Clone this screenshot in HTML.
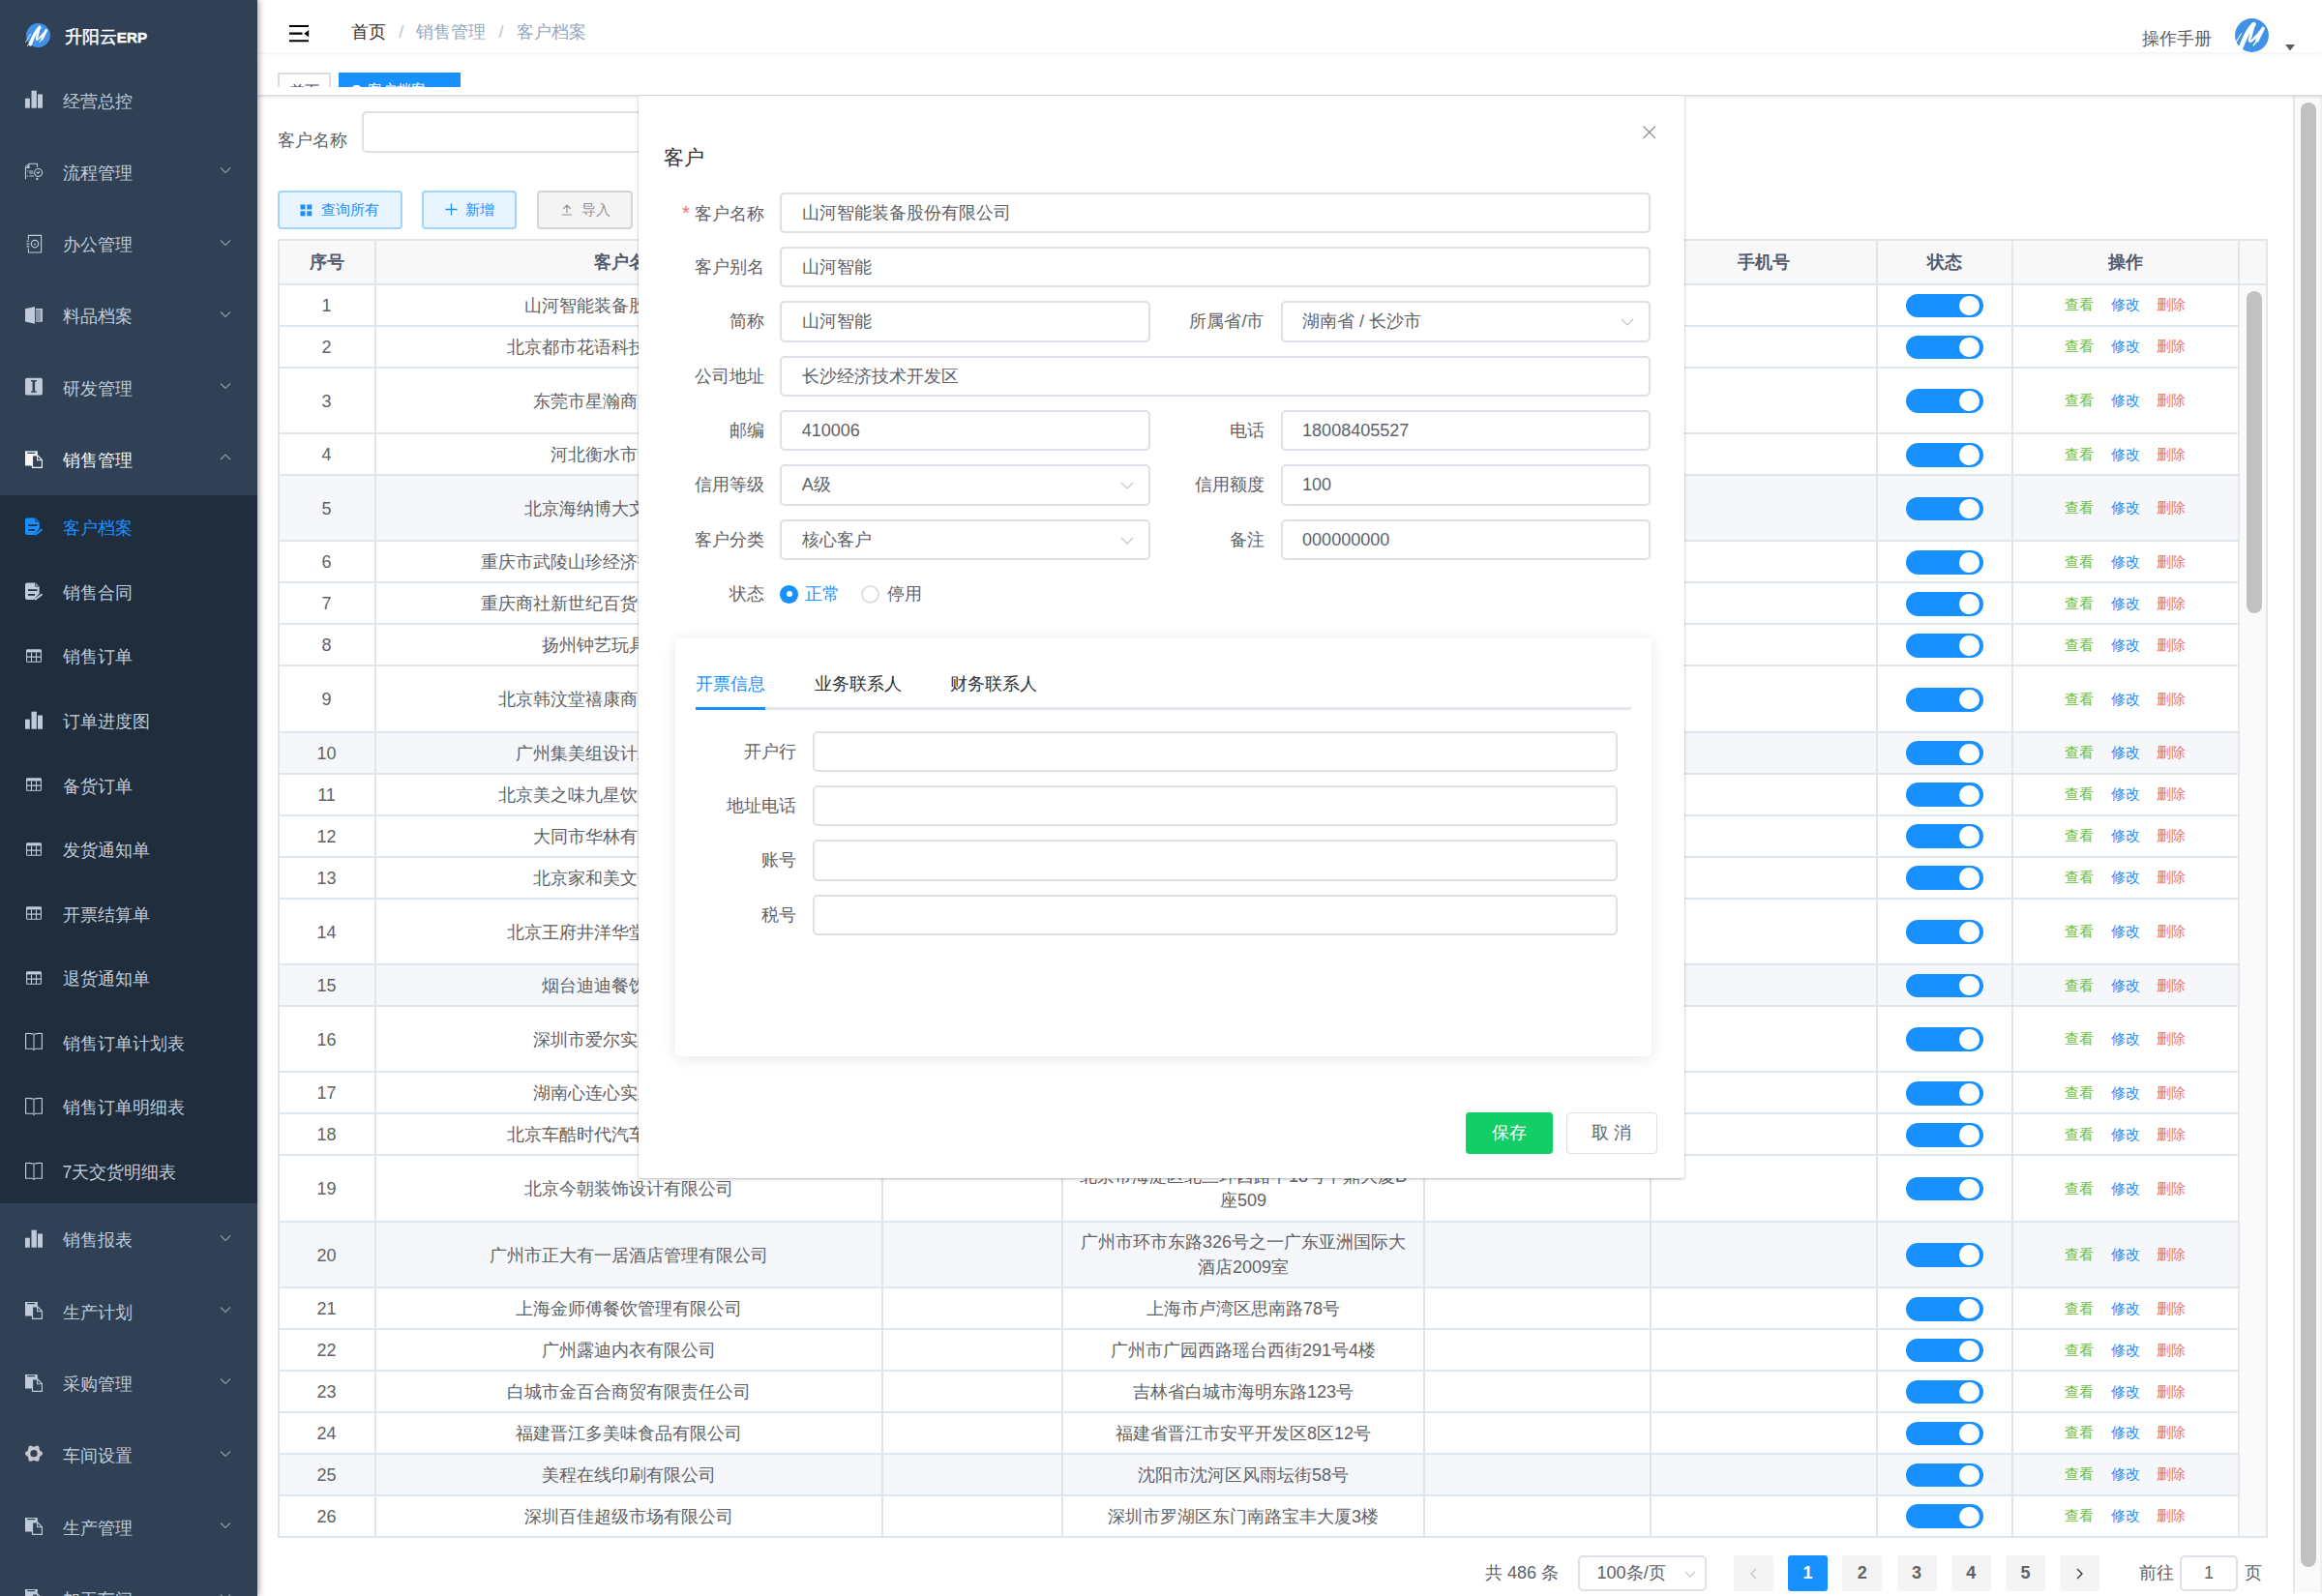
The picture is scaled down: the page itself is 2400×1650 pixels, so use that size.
<!DOCTYPE html><html><head><meta charset="utf-8"><title>客户档案</title><style>
*{box-sizing:border-box}
html,body{margin:0;padding:0}
body{width:2400px;height:1650px;overflow:hidden;position:relative;background:#fff;font-family:"Liberation Sans", sans-serif;color:#606266}
.a{position:absolute}
.t{white-space:nowrap}
#sb{left:0;top:0;width:266px;height:1650px;background:#304156;z-index:5;overflow:hidden;box-shadow:2px 0 6px rgba(0,21,41,.35)}
.mi{position:absolute;left:0;width:266px;font-size:17.7px;color:#bfcbd9}
.mi .ic{position:absolute;left:25px;width:20px;height:20px}
.mi .tx{position:absolute;left:64.5px;top:1.5px;white-space:nowrap}
.mi .ar{position:absolute;left:227px;width:12px;height:8px}
#nav{left:266px;top:0;width:2134px;height:54px;background:#fff;box-shadow:0 1px 4px rgba(0,21,41,.08);z-index:3}
#tags{left:266px;top:54px;width:2134px;height:45px;background:#fff;border-bottom:1.5px solid #d8dce5;box-shadow:0 1px 3px 0 rgba(0,0,0,.12),0 0 3px 0 rgba(0,0,0,.04);z-index:2;overflow:hidden}
.inp{position:absolute;border:2px solid #dde0e7;border-radius:5px;background:#fff;font-size:18px;color:#606266;white-space:nowrap}
.lbl{position:absolute;font-size:18px;color:#606266;white-space:nowrap;text-align:right}
.btn{position:absolute;border-radius:4px;font-size:15.4px;white-space:nowrap}
.cell{position:absolute;font-size:18px;color:#606266;text-align:center;white-space:nowrap}
.hl{position:absolute;background:#dfe6ec}
</style></head><body>
<div id="sb" class="a">
<svg class="a" style="left:26.5px;top:24px;overflow:visible" width="25" height="25" viewBox="0 0 25 25"><circle cx="12.5" cy="12.5" r="12.45" fill="#3f92e8"/><g fill="none" stroke="#fff" stroke-linecap="round" stroke-linejoin="round"><path d="M4.3 21.8C6.8 15 9.8 8.5 13.9 4.4" stroke-width="3.4"/><path d="M13.9 4.4C13.4 7.2 12.2 10.2 11.6 13.2" stroke-width="2.2"/><path d="M11.6 13.2Q10 16.6 11.2 17Q12.6 17.3 20.8 7.4" stroke-width="1.9"/><path d="M20.8 7.4L16.4 16.4" stroke-width="2.5"/><path d="M16.4 16.4L13.7 19.8" stroke-width="1"/><path d="M-0.5 19.6L4.6 11.4M1.4 23.6L4 19.4" stroke-width="0.8"/></g></svg>
<div class="a t" style="left:66.8px;top:24px;height:28px;line-height:28px;font-size:17.6px;font-weight:normal;-webkit-text-stroke:0.45px #fff;color:#fff">升阳云<span style="font-size:15.2px;font-weight:bold">ERP</span></div>
<div class="mi" style="top:66.00px;height:74.3px;line-height:74.3px;color:#bfcbd9">
<svg class="ic" style="top:27.15px" viewBox="0 0 20 20"><rect x="1" y="8.7" width="4.8" height="10" fill="#bfcbd9"/><rect x="7.5" y="0.7" width="5.4" height="18" fill="#bfcbd9"/><rect x="14" y="4.5" width="5" height="14.2" fill="#bfcbd9"/></svg>
<span class="tx">经营总控</span>
</div>
<div class="mi" style="top:140.30px;height:74.3px;line-height:74.3px;color:#bfcbd9">
<svg class="ic" style="top:27.15px" viewBox="0 0 20 20" fill="none" stroke="#bfcbd9" stroke-width="1.1"><path d="M1.5 18.3V5.4L5.2 2.2H13.4V5.8"/><path d="M5.5 2.6V6.9H2Z" fill="#bfcbd9" stroke="none"/><path d="M3 10h1.2M5 10h4M5 12h4.5M3 15h1.2M5.5 15h4.5"/><circle cx="14.6" cy="11.5" r="4"/><path d="M12.8 10.6l1.5 1.8 1.6-2.3"/><circle cx="13.4" cy="18" r="0.6" fill="#bfcbd9"/></svg>
<span class="tx">流程管理</span>
<svg class="ar" style="top:31.95px" viewBox="0 0 12 8"><path d="M1 1.5 L6 6.5 L11 1.5" fill="none" stroke="#909aa8" stroke-width="1.1"/></svg>
</div>
<div class="mi" style="top:214.60px;height:74.3px;line-height:74.3px;color:#bfcbd9">
<svg class="ic" style="top:27.15px" viewBox="0 0 20 20" fill="none" stroke="#bfcbd9" stroke-width="1.15"><path d="M4.4 5.8V1.4H17.6V19H4.4V14.8"/><path d="M2.5 7.2h2.8M2.5 10.1h2.8M2.5 12.8h2.8"/><circle cx="11" cy="10.1" r="3.7"/><path d="M10 11.2L11 9l1.3 2.2z" fill="#bfcbd9" stroke="none"/></svg>
<span class="tx">办公管理</span>
<svg class="ar" style="top:31.95px" viewBox="0 0 12 8"><path d="M1 1.5 L6 6.5 L11 1.5" fill="none" stroke="#909aa8" stroke-width="1.1"/></svg>
</div>
<div class="mi" style="top:288.90px;height:74.3px;line-height:74.3px;color:#bfcbd9">
<svg class="ic" style="top:27.15px" viewBox="0 0 20 20"><path d="M1 3.3 L11 1 V18.8 L1 16.6 Z" fill="#bfcbd9"/><rect x="11.9" y="3" width="7" height="13.7" fill="#bfcbd9"/><path d="M12 5h5.2M12 7h5.2M12 9h5.2M12 11h5.2M12 13h5.2M12 15h5.2" stroke="#304156" stroke-width="0.75"/></svg>
<span class="tx">料品档案</span>
<svg class="ar" style="top:31.95px" viewBox="0 0 12 8"><path d="M1 1.5 L6 6.5 L11 1.5" fill="none" stroke="#909aa8" stroke-width="1.1"/></svg>
</div>
<div class="mi" style="top:363.20px;height:74.3px;line-height:74.3px;color:#bfcbd9">
<svg class="ic" style="top:27.15px" viewBox="0 0 20 20"><rect x="1" y="0.7" width="17.9" height="17.9" rx="1.8" fill="#bfcbd9"/><path d="M7 3.7h5.9M7 15.1h5.9" stroke="#304156" stroke-width="1.4"/><path d="M9.85 3.7v11.4" stroke="#304156" stroke-width="2.6"/></svg>
<span class="tx">研发管理</span>
<svg class="ar" style="top:31.95px" viewBox="0 0 12 8"><path d="M1 1.5 L6 6.5 L11 1.5" fill="none" stroke="#909aa8" stroke-width="1.1"/></svg>
</div>
<div class="mi" style="top:437.50px;height:74.3px;line-height:74.3px;color:#f4f4f5">
<svg class="ic" style="top:27.15px" viewBox="0 0 20 20"><path d="M1 1.3H13.8V16.5H1Z" fill="#f4f4f5"/><path d="M3.3 3.3h7.9" stroke="#304156" stroke-width="1.3"/><path d="M8.5 18.3V5.9H13.8L18.4 10.5V18.3Z" fill="#304156" stroke="#f4f4f5" stroke-width="1.15"/><path d="M13.6 6.2V10.7H18" fill="none" stroke="#f4f4f5" stroke-width="1.1"/></svg>
<span class="tx">销售管理</span>
<svg class="ar" style="top:30.15px" viewBox="0 0 12 8"><path d="M1 7 L6 2 L11 7" fill="none" stroke="#909aa8" stroke-width="1.1"/></svg>
</div>
<div class="a" style="left:0;top:511.80px;width:266px;height:732.05px;background:#1f2d3d"></div>
<div class="mi" style="top:511.80px;height:66.55px;line-height:66.55px;color:#1890ff">
<svg class="ic" style="top:23.27px" viewBox="0 0 20 20"><path d="M1 2.2Q1 0.4 2.8 0.4H11.6L15.6 4.4V11.5L10 17.9H2.8Q1 17.9 1 16.1Z" fill="#1890ff"/><path d="M11.8 0.6V4.2H15.4" fill="none" stroke="#1f2d3d" stroke-width="0.9"/><path d="M4 8.1h9.5M4 12.9h7" stroke="#1f2d3d" stroke-width="1.7"/><path d="M11 18 L18.6 12.3" stroke="#1890ff" stroke-width="2"/></svg>
<span class="tx">客户档案</span></div>
<div class="mi" style="top:578.35px;height:66.55px;line-height:66.55px;color:#bfcbd9">
<svg class="ic" style="top:23.27px" viewBox="0 0 20 20"><path d="M1 2.2Q1 0.4 2.8 0.4H11.6L15.6 4.4V11.5L10 17.9H2.8Q1 17.9 1 16.1Z" fill="#bfcbd9"/><path d="M11.8 0.6V4.2H15.4" fill="none" stroke="#1f2d3d" stroke-width="0.9"/><path d="M4 8.1h9.5M4 12.9h7" stroke="#1f2d3d" stroke-width="1.7"/><path d="M11 18 L18.6 12.3" stroke="#bfcbd9" stroke-width="2"/></svg>
<span class="tx">销售合同</span></div>
<div class="mi" style="top:644.90px;height:66.55px;line-height:66.55px;color:#bfcbd9">
<svg class="ic" style="top:23.27px" viewBox="0 0 20 20" fill="none" stroke="#bfcbd9" stroke-width="1.1"><rect x="2.6" y="3.8" width="14.8" height="12.4" rx="0.8"/><path d="M2.6 5.2h14.8" stroke-width="2.4"/><path d="M2.6 11.1h14.8M7.5 6.5v9.7M12.5 6.5v9.7"/></svg>
<span class="tx">销售订单</span></div>
<div class="mi" style="top:711.45px;height:66.55px;line-height:66.55px;color:#bfcbd9">
<svg class="ic" style="top:23.27px" viewBox="0 0 20 20"><rect x="1" y="8.7" width="4.8" height="10" fill="#bfcbd9"/><rect x="7.5" y="0.7" width="5.4" height="18" fill="#bfcbd9"/><rect x="14" y="4.5" width="5" height="14.2" fill="#bfcbd9"/></svg>
<span class="tx">订单进度图</span></div>
<div class="mi" style="top:778.00px;height:66.55px;line-height:66.55px;color:#bfcbd9">
<svg class="ic" style="top:23.27px" viewBox="0 0 20 20" fill="none" stroke="#bfcbd9" stroke-width="1.1"><rect x="2.6" y="3.8" width="14.8" height="12.4" rx="0.8"/><path d="M2.6 5.2h14.8" stroke-width="2.4"/><path d="M2.6 11.1h14.8M7.5 6.5v9.7M12.5 6.5v9.7"/></svg>
<span class="tx">备货订单</span></div>
<div class="mi" style="top:844.55px;height:66.55px;line-height:66.55px;color:#bfcbd9">
<svg class="ic" style="top:23.27px" viewBox="0 0 20 20" fill="none" stroke="#bfcbd9" stroke-width="1.1"><rect x="2.6" y="3.8" width="14.8" height="12.4" rx="0.8"/><path d="M2.6 5.2h14.8" stroke-width="2.4"/><path d="M2.6 11.1h14.8M7.5 6.5v9.7M12.5 6.5v9.7"/></svg>
<span class="tx">发货通知单</span></div>
<div class="mi" style="top:911.10px;height:66.55px;line-height:66.55px;color:#bfcbd9">
<svg class="ic" style="top:23.27px" viewBox="0 0 20 20" fill="none" stroke="#bfcbd9" stroke-width="1.1"><rect x="2.6" y="3.8" width="14.8" height="12.4" rx="0.8"/><path d="M2.6 5.2h14.8" stroke-width="2.4"/><path d="M2.6 11.1h14.8M7.5 6.5v9.7M12.5 6.5v9.7"/></svg>
<span class="tx">开票结算单</span></div>
<div class="mi" style="top:977.65px;height:66.55px;line-height:66.55px;color:#bfcbd9">
<svg class="ic" style="top:23.27px" viewBox="0 0 20 20" fill="none" stroke="#bfcbd9" stroke-width="1.1"><rect x="2.6" y="3.8" width="14.8" height="12.4" rx="0.8"/><path d="M2.6 5.2h14.8" stroke-width="2.4"/><path d="M2.6 11.1h14.8M7.5 6.5v9.7M12.5 6.5v9.7"/></svg>
<span class="tx">退货通知单</span></div>
<div class="mi" style="top:1044.20px;height:66.55px;line-height:66.55px;color:#bfcbd9">
<svg class="ic" style="top:23.27px" viewBox="0 0 20 20" fill="none" stroke="#bfcbd9" stroke-width="1.15"><path d="M10 2.3Q6 0.9 1.6 1.5V17.2H8Q9.2 17.2 10 18.4Q10.8 17.2 12 17.2H18.4V1.5Q14 0.9 10 2.3Z"/><path d="M10 2.3V18.2" stroke-width="1.5" stroke="#8d9aab"/></svg>
<span class="tx">销售订单计划表</span></div>
<div class="mi" style="top:1110.75px;height:66.55px;line-height:66.55px;color:#bfcbd9">
<svg class="ic" style="top:23.27px" viewBox="0 0 20 20" fill="none" stroke="#bfcbd9" stroke-width="1.15"><path d="M10 2.3Q6 0.9 1.6 1.5V17.2H8Q9.2 17.2 10 18.4Q10.8 17.2 12 17.2H18.4V1.5Q14 0.9 10 2.3Z"/><path d="M10 2.3V18.2" stroke-width="1.5" stroke="#8d9aab"/></svg>
<span class="tx">销售订单明细表</span></div>
<div class="mi" style="top:1177.30px;height:66.55px;line-height:66.55px;color:#bfcbd9">
<svg class="ic" style="top:23.27px" viewBox="0 0 20 20" fill="none" stroke="#bfcbd9" stroke-width="1.15"><path d="M10 2.3Q6 0.9 1.6 1.5V17.2H8Q9.2 17.2 10 18.4Q10.8 17.2 12 17.2H18.4V1.5Q14 0.9 10 2.3Z"/><path d="M10 2.3V18.2" stroke-width="1.5" stroke="#8d9aab"/></svg>
<span class="tx">7天交货明细表</span></div>
<div class="mi" style="top:1243.85px;height:74.3px;line-height:74.3px">
<svg class="ic" style="top:27.15px" viewBox="0 0 20 20"><rect x="1" y="8.7" width="4.8" height="10" fill="#bfcbd9"/><rect x="7.5" y="0.7" width="5.4" height="18" fill="#bfcbd9"/><rect x="14" y="4.5" width="5" height="14.2" fill="#bfcbd9"/></svg>
<span class="tx">销售报表</span>
<svg class="ar" style="top:31.95px" viewBox="0 0 12 8"><path d="M1 1.5 L6 6.5 L11 1.5" fill="none" stroke="#909aa8" stroke-width="1.1"/></svg>
</div>
<div class="mi" style="top:1318.15px;height:74.3px;line-height:74.3px">
<svg class="ic" style="top:27.15px" viewBox="0 0 20 20"><path d="M1 1H13.8V15.5H1Z" fill="#bfcbd9"/><path d="M3.3 2.6h7.9" stroke="#304156" stroke-width="1.3"/><path d="M8.5 18.4V5.9H13.8L18.4 10.5V18.4Z" fill="#304156" stroke="#bfcbd9" stroke-width="1.15"/><path d="M13.6 6.2V10.7H18" fill="none" stroke="#bfcbd9" stroke-width="1.1"/></svg>
<span class="tx">生产计划</span>
<svg class="ar" style="top:31.95px" viewBox="0 0 12 8"><path d="M1 1.5 L6 6.5 L11 1.5" fill="none" stroke="#909aa8" stroke-width="1.1"/></svg>
</div>
<div class="mi" style="top:1392.45px;height:74.3px;line-height:74.3px">
<svg class="ic" style="top:27.15px" viewBox="0 0 20 20"><path d="M1 1H13.8V15.5H1Z" fill="#bfcbd9"/><path d="M3.3 2.6h7.9" stroke="#304156" stroke-width="1.3"/><path d="M8.5 18.4V5.9H13.8L18.4 10.5V18.4Z" fill="#304156" stroke="#bfcbd9" stroke-width="1.15"/><path d="M13.6 6.2V10.7H18" fill="none" stroke="#bfcbd9" stroke-width="1.1"/></svg>
<span class="tx">采购管理</span>
<svg class="ar" style="top:31.95px" viewBox="0 0 12 8"><path d="M1 1.5 L6 6.5 L11 1.5" fill="none" stroke="#909aa8" stroke-width="1.1"/></svg>
</div>
<div class="mi" style="top:1466.75px;height:74.3px;line-height:74.3px">
<svg class="ic" style="top:27.15px" viewBox="0 0 20 20"><path fill="#c4c8ce" fill-rule="evenodd" d="M19.05 8.70 L18.95 9.29 L18.67 9.84 L18.24 10.34 L17.73 10.77 L17.19 11.14 L16.71 11.48 L16.30 11.81 L16.02 12.17 L15.85 12.61 L15.76 13.12 L15.71 13.71 L15.66 14.36 L15.54 15.02 L15.32 15.64 L14.98 16.16 L14.53 16.54 L13.97 16.75 L13.35 16.78 L12.70 16.66 L12.07 16.43 L11.48 16.15 L10.95 15.90 L10.46 15.71 L10.00 15.65 L9.54 15.71 L9.05 15.90 L8.52 16.15 L7.93 16.43 L7.30 16.66 L6.65 16.78 L6.03 16.75 L5.48 16.54 L5.02 16.16 L4.68 15.64 L4.46 15.02 L4.34 14.36 L4.29 13.71 L4.24 13.12 L4.15 12.61 L3.98 12.17 L3.70 11.81 L3.29 11.48 L2.81 11.14 L2.27 10.77 L1.76 10.34 L1.33 9.84 L1.05 9.29 L0.95 8.70 L1.05 8.11 L1.33 7.56 L1.76 7.06 L2.27 6.63 L2.81 6.26 L3.29 5.92 L3.70 5.59 L3.98 5.23 L4.15 4.79 L4.24 4.28 L4.29 3.69 L4.34 3.04 L4.46 2.38 L4.68 1.76 L5.02 1.24 L5.47 0.86 L6.03 0.65 L6.65 0.62 L7.30 0.74 L7.93 0.97 L8.52 1.25 L9.05 1.50 L9.54 1.69 L10.00 1.75 L10.46 1.69 L10.95 1.50 L11.48 1.25 L12.07 0.97 L12.70 0.74 L13.35 0.62 L13.97 0.65 L14.53 0.86 L14.98 1.24 L15.32 1.76 L15.54 2.38 L15.66 3.04 L15.71 3.69 L15.76 4.28 L15.85 4.79 L16.02 5.22 L16.30 5.59 L16.71 5.92 L17.19 6.26 L17.73 6.63 L18.24 7.06 L18.67 7.56 L18.95 8.11 Z M13.6 8.7 A3.6 3.6 0 1 0 6.4 8.7 A3.6 3.6 0 1 0 13.6 8.7 Z"/></svg>
<span class="tx">车间设置</span>
<svg class="ar" style="top:31.95px" viewBox="0 0 12 8"><path d="M1 1.5 L6 6.5 L11 1.5" fill="none" stroke="#909aa8" stroke-width="1.1"/></svg>
</div>
<div class="mi" style="top:1541.05px;height:74.3px;line-height:74.3px">
<svg class="ic" style="top:27.15px" viewBox="0 0 20 20"><path d="M1 1H13.8V15.5H1Z" fill="#bfcbd9"/><path d="M3.3 2.6h7.9" stroke="#304156" stroke-width="1.3"/><path d="M8.5 18.4V5.9H13.8L18.4 10.5V18.4Z" fill="#304156" stroke="#bfcbd9" stroke-width="1.15"/><path d="M13.6 6.2V10.7H18" fill="none" stroke="#bfcbd9" stroke-width="1.1"/></svg>
<span class="tx">生产管理</span>
<svg class="ar" style="top:31.95px" viewBox="0 0 12 8"><path d="M1 1.5 L6 6.5 L11 1.5" fill="none" stroke="#909aa8" stroke-width="1.1"/></svg>
</div>
<div class="mi" style="top:1615.35px;height:74.3px;line-height:74.3px">
<svg class="ic" style="top:27.15px" viewBox="0 0 20 20"><path d="M1 1H13.8V15.5H1Z" fill="#bfcbd9"/><path d="M3.3 2.6h7.9" stroke="#304156" stroke-width="1.3"/><path d="M8.5 18.4V5.9H13.8L18.4 10.5V18.4Z" fill="#304156" stroke="#bfcbd9" stroke-width="1.15"/><path d="M13.6 6.2V10.7H18" fill="none" stroke="#bfcbd9" stroke-width="1.1"/></svg>
<span class="tx">加工车间</span>
<svg class="ar" style="top:31.95px" viewBox="0 0 12 8"><path d="M1 1.5 L6 6.5 L11 1.5" fill="none" stroke="#909aa8" stroke-width="1.1"/></svg>
</div>
</div>
<div id="nav" class="a">
<svg class="a" style="left:32.8px;top:25.8px" width="21" height="18" viewBox="0 0 21 18"><path d="M0 1.05h20M0 8.65h13.5M0 16.25h20" stroke="#000" stroke-width="2.1"/><path d="M20.2 5 L15.2 8.65 L20.2 12.3 Z" fill="#000"/></svg>
<div class="a t" style="left:97px;top:19px;height:28px;line-height:28px;font-size:18px"><span style="color:#303133">首页</span><span style="color:#c0c4cc;margin:0 13.2px">/</span><span style="color:#97a8be">销售管理</span><span style="color:#c0c4cc;margin:0 13.2px">/</span><span style="color:#97a8be">客户档案</span></div>
<div class="a t" style="left:1947.5px;top:25.5px;height:28px;line-height:28px;font-size:18px;color:#5a5e66">操作手册</div>
<svg class="a" style="left:2044px;top:18.7px;overflow:visible" width="35" height="35" viewBox="0 0 25 25"><circle cx="12.5" cy="12.5" r="12.45" fill="#3f92e8"/><g fill="none" stroke="#fff" stroke-linecap="round" stroke-linejoin="round"><path d="M4.3 21.8C6.8 15 9.8 8.5 13.9 4.4" stroke-width="3.4"/><path d="M13.9 4.4C13.4 7.2 12.2 10.2 11.6 13.2" stroke-width="2.2"/><path d="M11.6 13.2Q10 16.6 11.2 17Q12.6 17.3 20.8 7.4" stroke-width="1.9"/><path d="M20.8 7.4L16.4 16.4" stroke-width="2.5"/><path d="M16.4 16.4L13.7 19.8" stroke-width="1"/><path d="M-0.5 19.6L4.6 11.4M1.4 23.6L4 19.4" stroke-width="0.8"/></g></svg>
<svg class="a" style="left:2095.5px;top:45.5px" width="10" height="7" viewBox="0 0 10 7"><path d="M0 0H10L5 6.5Z" fill="#5a5e66"/></svg>
</div>
<div id="tags" class="a">
<div class="a" style="left:21.3px;top:21.3px;width:54.5px;height:14.5px;overflow:hidden"><div style="width:54.5px;height:35px;border:2px solid #dadde5;background:#fff;font-size:15.4px;line-height:33px;text-align:center;color:#495060">首页</div></div>
<div class="a" style="left:84.1px;top:21.3px;width:125.8px;height:14.5px;overflow:hidden"><div style="width:125.8px;height:35px;background:#1890ff;font-size:15.4px;line-height:35px;color:#fff;white-space:nowrap;padding-left:13.3px"><span style="display:inline-block;width:10.7px;height:10.7px;border-radius:50%;background:#fff;margin-right:6px;vertical-align:0"></span>客户档案</div></div>
</div>
<div class="lbl" style="left:287px;top:131px;line-height:28px;height:28px">客户名称</div>
<div class="inp" style="left:374.2px;top:114.8px;width:330px;height:43.3px"></div>
<div class="btn" style="left:287px;top:197.2px;width:129px;height:39.7px;background:#e8f4ff;border:2px solid #a3d3ff;color:#1890ff;line-height:35.7px"><svg class="a" style="left:21.3px;top:11.6px" width="13" height="13" viewBox="0 0 13 13"><rect x="0.5" y="0.5" width="5" height="5" fill="#1890ff"/><rect x="7.3" y="0.5" width="5" height="5" fill="#1890ff"/><rect x="0.5" y="7.3" width="5" height="5" fill="#1890ff"/><rect x="7.3" y="7.3" width="5" height="5" fill="#1890ff"/></svg><span class="a" style="left:43px;top:0">查询所有</span></div>
<div class="btn" style="left:436.3px;top:197.2px;width:98.2px;height:39.7px;background:#e8f4ff;border:2px solid #a3d3ff;color:#1890ff;line-height:35.7px"><svg class="a" style="left:21.7px;top:11.3px" width="13" height="13" viewBox="0 0 13 13"><path d="M6.5 0.5v12M0.5 6.5h12" stroke="#1890ff" stroke-width="1.3"/></svg><span class="a" style="left:43px;top:0">新增</span></div>
<div class="btn" style="left:555px;top:197.2px;width:99px;height:39.7px;background:#f4f4f5;border:2px solid #d3d4d6;color:#909399;line-height:35.7px"><svg class="a" style="left:22.5px;top:11px" width="12" height="13" viewBox="0 0 12 13"><path d="M6 10V2.2M2.3 5.8L6 2.2l3.7 3.6M0.8 12h10.4" fill="none" stroke="#909399" stroke-width="1.2"/></svg><span class="a" style="left:44px;top:0">导入</span></div>
<div class="a" style="left:287.5px;top:248.0px;width:2055.5px;height:46.0px;background:#f8f8f9"></div>
<div class="cell" style="left:287.5px;top:248.0px;width:100.0px;height:46.0px;line-height:46.0px;font-weight:bold;color:#515a6e">序号</div>
<div class="cell" style="left:387.5px;top:248.0px;width:524.3px;height:46.0px;line-height:46.0px;font-weight:bold;color:#515a6e">客户名称</div>
<div class="cell" style="left:911.8px;top:248.0px;width:186.20000000000005px;height:46.0px;line-height:46.0px;font-weight:bold;color:#515a6e">简称</div>
<div class="cell" style="left:1098.0px;top:248.0px;width:374.0px;height:46.0px;line-height:46.0px;font-weight:bold;color:#515a6e">地址</div>
<div class="cell" style="left:1472.0px;top:248.0px;width:233.5999999999999px;height:46.0px;line-height:46.0px;font-weight:bold;color:#515a6e">联系人</div>
<div class="cell" style="left:1705.6px;top:248.0px;width:234.70000000000005px;height:46.0px;line-height:46.0px;font-weight:bold;color:#515a6e">手机号</div>
<div class="cell" style="left:1940.3px;top:248.0px;width:139.60000000000014px;height:46.0px;line-height:46.0px;font-weight:bold;color:#515a6e">状态</div>
<div class="cell" style="left:2079.9px;top:248.0px;width:234.0999999999999px;height:46.0px;line-height:46.0px;font-weight:bold;color:#515a6e">操作</div>
<div class="cell" style="left:287.5px;top:294.80px;width:100px;height:42.95px;line-height:42.95px">1</div>
<div class="cell" style="left:387.5px;top:294.80px;width:524.3px;height:42.95px;line-height:42.95px">山河智能装备股份有限公司</div>
<div class="a" style="left:1969.8px;top:303.58px;width:80px;height:24.8px;border-radius:12.4px;background:#1890ff"><div class="a" style="left:55.2px;top:2.1px;width:20.6px;height:20.6px;border-radius:50%;background:#fff"></div></div>
<div class="a t" style="left:2134px;top:301.48px;height:28px;line-height:28px;font-size:15.4px"><span style="color:#67c23a">查看</span><span style="color:#1890ff;margin-left:17.6px">修改</span><span style="color:#f56c6c;margin-left:17.6px">删除</span></div>
<div class="cell" style="left:287.5px;top:337.75px;width:100px;height:42.95px;line-height:42.95px">2</div>
<div class="cell" style="left:387.5px;top:337.75px;width:524.3px;height:42.95px;line-height:42.95px">北京都市花语科技发展有限公司</div>
<div class="a" style="left:1969.8px;top:346.53px;width:80px;height:24.8px;border-radius:12.4px;background:#1890ff"><div class="a" style="left:55.2px;top:2.1px;width:20.6px;height:20.6px;border-radius:50%;background:#fff"></div></div>
<div class="a t" style="left:2134px;top:344.43px;height:28px;line-height:28px;font-size:15.4px"><span style="color:#67c23a">查看</span><span style="color:#1890ff;margin-left:17.6px">修改</span><span style="color:#f56c6c;margin-left:17.6px">删除</span></div>
<div class="cell" style="left:287.5px;top:380.70px;width:100px;height:68.4px;line-height:68.4px">3</div>
<div class="cell" style="left:387.5px;top:380.70px;width:524.3px;height:68.4px;line-height:68.4px">东莞市星瀚商贸有限公司</div>
<div class="a" style="left:1969.8px;top:402.20px;width:80px;height:24.8px;border-radius:12.4px;background:#1890ff"><div class="a" style="left:55.2px;top:2.1px;width:20.6px;height:20.6px;border-radius:50%;background:#fff"></div></div>
<div class="a t" style="left:2134px;top:400.10px;height:28px;line-height:28px;font-size:15.4px"><span style="color:#67c23a">查看</span><span style="color:#1890ff;margin-left:17.6px">修改</span><span style="color:#f56c6c;margin-left:17.6px">删除</span></div>
<div class="cell" style="left:287.5px;top:449.10px;width:100px;height:42.95px;line-height:42.95px">4</div>
<div class="cell" style="left:387.5px;top:449.10px;width:524.3px;height:42.95px;line-height:42.95px">河北衡水市食品公司</div>
<div class="a" style="left:1969.8px;top:457.88px;width:80px;height:24.8px;border-radius:12.4px;background:#1890ff"><div class="a" style="left:55.2px;top:2.1px;width:20.6px;height:20.6px;border-radius:50%;background:#fff"></div></div>
<div class="a t" style="left:2134px;top:455.77px;height:28px;line-height:28px;font-size:15.4px"><span style="color:#67c23a">查看</span><span style="color:#1890ff;margin-left:17.6px">修改</span><span style="color:#f56c6c;margin-left:17.6px">删除</span></div>
<div class="a" style="left:287.5px;top:491.25px;width:2026.5px;height:68.4px;background:#f5f7fa"></div>
<div class="cell" style="left:287.5px;top:492.05px;width:100px;height:68.4px;line-height:68.4px">5</div>
<div class="cell" style="left:387.5px;top:492.05px;width:524.3px;height:68.4px;line-height:68.4px">北京海纳博大文化有限公司</div>
<div class="a" style="left:1969.8px;top:513.55px;width:80px;height:24.8px;border-radius:12.4px;background:#1890ff"><div class="a" style="left:55.2px;top:2.1px;width:20.6px;height:20.6px;border-radius:50%;background:#fff"></div></div>
<div class="a t" style="left:2134px;top:511.45px;height:28px;line-height:28px;font-size:15.4px"><span style="color:#67c23a">查看</span><span style="color:#1890ff;margin-left:17.6px">修改</span><span style="color:#f56c6c;margin-left:17.6px">删除</span></div>
<div class="cell" style="left:287.5px;top:560.45px;width:100px;height:42.95px;line-height:42.95px">6</div>
<div class="cell" style="left:387.5px;top:560.45px;width:524.3px;height:42.95px;line-height:42.95px">重庆市武陵山珍经济技术开发有限公司</div>
<div class="a" style="left:1969.8px;top:569.23px;width:80px;height:24.8px;border-radius:12.4px;background:#1890ff"><div class="a" style="left:55.2px;top:2.1px;width:20.6px;height:20.6px;border-radius:50%;background:#fff"></div></div>
<div class="a t" style="left:2134px;top:567.12px;height:28px;line-height:28px;font-size:15.4px"><span style="color:#67c23a">查看</span><span style="color:#1890ff;margin-left:17.6px">修改</span><span style="color:#f56c6c;margin-left:17.6px">删除</span></div>
<div class="cell" style="left:287.5px;top:603.40px;width:100px;height:42.95px;line-height:42.95px">7</div>
<div class="cell" style="left:387.5px;top:603.40px;width:524.3px;height:42.95px;line-height:42.95px">重庆商社新世纪百货连锁经营有限公司</div>
<div class="a" style="left:1969.8px;top:612.18px;width:80px;height:24.8px;border-radius:12.4px;background:#1890ff"><div class="a" style="left:55.2px;top:2.1px;width:20.6px;height:20.6px;border-radius:50%;background:#fff"></div></div>
<div class="a t" style="left:2134px;top:610.08px;height:28px;line-height:28px;font-size:15.4px"><span style="color:#67c23a">查看</span><span style="color:#1890ff;margin-left:17.6px">修改</span><span style="color:#f56c6c;margin-left:17.6px">删除</span></div>
<div class="cell" style="left:287.5px;top:646.35px;width:100px;height:42.95px;line-height:42.95px">8</div>
<div class="cell" style="left:387.5px;top:646.35px;width:524.3px;height:42.95px;line-height:42.95px">扬州钟艺玩具有限公司</div>
<div class="a" style="left:1969.8px;top:655.13px;width:80px;height:24.8px;border-radius:12.4px;background:#1890ff"><div class="a" style="left:55.2px;top:2.1px;width:20.6px;height:20.6px;border-radius:50%;background:#fff"></div></div>
<div class="a t" style="left:2134px;top:653.03px;height:28px;line-height:28px;font-size:15.4px"><span style="color:#67c23a">查看</span><span style="color:#1890ff;margin-left:17.6px">修改</span><span style="color:#f56c6c;margin-left:17.6px">删除</span></div>
<div class="cell" style="left:287.5px;top:689.30px;width:100px;height:68.4px;line-height:68.4px">9</div>
<div class="cell" style="left:387.5px;top:689.30px;width:524.3px;height:68.4px;line-height:68.4px">北京韩汶堂禧康商贸有限责任公司</div>
<div class="a" style="left:1969.8px;top:710.80px;width:80px;height:24.8px;border-radius:12.4px;background:#1890ff"><div class="a" style="left:55.2px;top:2.1px;width:20.6px;height:20.6px;border-radius:50%;background:#fff"></div></div>
<div class="a t" style="left:2134px;top:708.70px;height:28px;line-height:28px;font-size:15.4px"><span style="color:#67c23a">查看</span><span style="color:#1890ff;margin-left:17.6px">修改</span><span style="color:#f56c6c;margin-left:17.6px">删除</span></div>
<div class="a" style="left:287.5px;top:756.90px;width:2026.5px;height:42.95px;background:#f5f7fa"></div>
<div class="cell" style="left:287.5px;top:757.70px;width:100px;height:42.95px;line-height:42.95px">10</div>
<div class="cell" style="left:387.5px;top:757.70px;width:524.3px;height:42.95px;line-height:42.95px">广州集美组设计工程有限公司</div>
<div class="a" style="left:1969.8px;top:766.48px;width:80px;height:24.8px;border-radius:12.4px;background:#1890ff"><div class="a" style="left:55.2px;top:2.1px;width:20.6px;height:20.6px;border-radius:50%;background:#fff"></div></div>
<div class="a t" style="left:2134px;top:764.38px;height:28px;line-height:28px;font-size:15.4px"><span style="color:#67c23a">查看</span><span style="color:#1890ff;margin-left:17.6px">修改</span><span style="color:#f56c6c;margin-left:17.6px">删除</span></div>
<div class="cell" style="left:287.5px;top:800.65px;width:100px;height:42.95px;line-height:42.95px">11</div>
<div class="cell" style="left:387.5px;top:800.65px;width:524.3px;height:42.95px;line-height:42.95px">北京美之味九星饮食有限责任公司</div>
<div class="a" style="left:1969.8px;top:809.43px;width:80px;height:24.8px;border-radius:12.4px;background:#1890ff"><div class="a" style="left:55.2px;top:2.1px;width:20.6px;height:20.6px;border-radius:50%;background:#fff"></div></div>
<div class="a t" style="left:2134px;top:807.33px;height:28px;line-height:28px;font-size:15.4px"><span style="color:#67c23a">查看</span><span style="color:#1890ff;margin-left:17.6px">修改</span><span style="color:#f56c6c;margin-left:17.6px">删除</span></div>
<div class="cell" style="left:287.5px;top:843.60px;width:100px;height:42.95px;line-height:42.95px">12</div>
<div class="cell" style="left:387.5px;top:843.60px;width:524.3px;height:42.95px;line-height:42.95px">大同市华林有限责任公司</div>
<div class="a" style="left:1969.8px;top:852.38px;width:80px;height:24.8px;border-radius:12.4px;background:#1890ff"><div class="a" style="left:55.2px;top:2.1px;width:20.6px;height:20.6px;border-radius:50%;background:#fff"></div></div>
<div class="a t" style="left:2134px;top:850.28px;height:28px;line-height:28px;font-size:15.4px"><span style="color:#67c23a">查看</span><span style="color:#1890ff;margin-left:17.6px">修改</span><span style="color:#f56c6c;margin-left:17.6px">删除</span></div>
<div class="cell" style="left:287.5px;top:886.55px;width:100px;height:42.95px;line-height:42.95px">13</div>
<div class="cell" style="left:387.5px;top:886.55px;width:524.3px;height:42.95px;line-height:42.95px">北京家和美文化有限公司</div>
<div class="a" style="left:1969.8px;top:895.33px;width:80px;height:24.8px;border-radius:12.4px;background:#1890ff"><div class="a" style="left:55.2px;top:2.1px;width:20.6px;height:20.6px;border-radius:50%;background:#fff"></div></div>
<div class="a t" style="left:2134px;top:893.23px;height:28px;line-height:28px;font-size:15.4px"><span style="color:#67c23a">查看</span><span style="color:#1890ff;margin-left:17.6px">修改</span><span style="color:#f56c6c;margin-left:17.6px">删除</span></div>
<div class="cell" style="left:287.5px;top:929.50px;width:100px;height:68.4px;line-height:68.4px">14</div>
<div class="cell" style="left:387.5px;top:929.50px;width:524.3px;height:68.4px;line-height:68.4px">北京王府井洋华堂商业有限公司</div>
<div class="a" style="left:1969.8px;top:951.00px;width:80px;height:24.8px;border-radius:12.4px;background:#1890ff"><div class="a" style="left:55.2px;top:2.1px;width:20.6px;height:20.6px;border-radius:50%;background:#fff"></div></div>
<div class="a t" style="left:2134px;top:948.90px;height:28px;line-height:28px;font-size:15.4px"><span style="color:#67c23a">查看</span><span style="color:#1890ff;margin-left:17.6px">修改</span><span style="color:#f56c6c;margin-left:17.6px">删除</span></div>
<div class="a" style="left:287.5px;top:997.10px;width:2026.5px;height:42.95px;background:#f5f7fa"></div>
<div class="cell" style="left:287.5px;top:997.90px;width:100px;height:42.95px;line-height:42.95px">15</div>
<div class="cell" style="left:387.5px;top:997.90px;width:524.3px;height:42.95px;line-height:42.95px">烟台迪迪餐饮有限公司</div>
<div class="a" style="left:1969.8px;top:1006.68px;width:80px;height:24.8px;border-radius:12.4px;background:#1890ff"><div class="a" style="left:55.2px;top:2.1px;width:20.6px;height:20.6px;border-radius:50%;background:#fff"></div></div>
<div class="a t" style="left:2134px;top:1004.58px;height:28px;line-height:28px;font-size:15.4px"><span style="color:#67c23a">查看</span><span style="color:#1890ff;margin-left:17.6px">修改</span><span style="color:#f56c6c;margin-left:17.6px">删除</span></div>
<div class="cell" style="left:287.5px;top:1040.85px;width:100px;height:68.4px;line-height:68.4px">16</div>
<div class="cell" style="left:387.5px;top:1040.85px;width:524.3px;height:68.4px;line-height:68.4px">深圳市爱尔实业有限公司</div>
<div class="a" style="left:1969.8px;top:1062.35px;width:80px;height:24.8px;border-radius:12.4px;background:#1890ff"><div class="a" style="left:55.2px;top:2.1px;width:20.6px;height:20.6px;border-radius:50%;background:#fff"></div></div>
<div class="a t" style="left:2134px;top:1060.25px;height:28px;line-height:28px;font-size:15.4px"><span style="color:#67c23a">查看</span><span style="color:#1890ff;margin-left:17.6px">修改</span><span style="color:#f56c6c;margin-left:17.6px">删除</span></div>
<div class="cell" style="left:287.5px;top:1109.25px;width:100px;height:42.95px;line-height:42.95px">17</div>
<div class="cell" style="left:387.5px;top:1109.25px;width:524.3px;height:42.95px;line-height:42.95px">湖南心连心实业有限公司</div>
<div class="a" style="left:1969.8px;top:1118.03px;width:80px;height:24.8px;border-radius:12.4px;background:#1890ff"><div class="a" style="left:55.2px;top:2.1px;width:20.6px;height:20.6px;border-radius:50%;background:#fff"></div></div>
<div class="a t" style="left:2134px;top:1115.93px;height:28px;line-height:28px;font-size:15.4px"><span style="color:#67c23a">查看</span><span style="color:#1890ff;margin-left:17.6px">修改</span><span style="color:#f56c6c;margin-left:17.6px">删除</span></div>
<div class="cell" style="left:287.5px;top:1152.20px;width:100px;height:42.95px;line-height:42.95px">18</div>
<div class="cell" style="left:387.5px;top:1152.20px;width:524.3px;height:42.95px;line-height:42.95px">北京车酷时代汽车服务有限公司</div>
<div class="a" style="left:1969.8px;top:1160.98px;width:80px;height:24.8px;border-radius:12.4px;background:#1890ff"><div class="a" style="left:55.2px;top:2.1px;width:20.6px;height:20.6px;border-radius:50%;background:#fff"></div></div>
<div class="a t" style="left:2134px;top:1158.88px;height:28px;line-height:28px;font-size:15.4px"><span style="color:#67c23a">查看</span><span style="color:#1890ff;margin-left:17.6px">修改</span><span style="color:#f56c6c;margin-left:17.6px">删除</span></div>
<div class="cell" style="left:287.5px;top:1195.15px;width:100px;height:68.4px;line-height:68.4px">19</div>
<div class="cell" style="left:387.5px;top:1195.15px;width:524.3px;height:68.4px;line-height:68.4px">北京今朝装饰设计有限公司</div>
<div class="cell" style="left:1098.0px;top:1203.95px;width:374.0px;height:50.80px;line-height:25.4px;white-space:normal">北京市海淀区北三环西路甲18号中鼎大厦B<br>座509</div>
<div class="a" style="left:1969.8px;top:1216.65px;width:80px;height:24.8px;border-radius:12.4px;background:#1890ff"><div class="a" style="left:55.2px;top:2.1px;width:20.6px;height:20.6px;border-radius:50%;background:#fff"></div></div>
<div class="a t" style="left:2134px;top:1214.55px;height:28px;line-height:28px;font-size:15.4px"><span style="color:#67c23a">查看</span><span style="color:#1890ff;margin-left:17.6px">修改</span><span style="color:#f56c6c;margin-left:17.6px">删除</span></div>
<div class="a" style="left:287.5px;top:1262.75px;width:2026.5px;height:68.4px;background:#f5f7fa"></div>
<div class="cell" style="left:287.5px;top:1263.55px;width:100px;height:68.4px;line-height:68.4px">20</div>
<div class="cell" style="left:387.5px;top:1263.55px;width:524.3px;height:68.4px;line-height:68.4px">广州市正大有一居酒店管理有限公司</div>
<div class="cell" style="left:1098.0px;top:1272.35px;width:374.0px;height:50.80px;line-height:25.4px;white-space:normal">广州市环市东路326号之一广东亚洲国际大<br>酒店2009室</div>
<div class="a" style="left:1969.8px;top:1285.05px;width:80px;height:24.8px;border-radius:12.4px;background:#1890ff"><div class="a" style="left:55.2px;top:2.1px;width:20.6px;height:20.6px;border-radius:50%;background:#fff"></div></div>
<div class="a t" style="left:2134px;top:1282.95px;height:28px;line-height:28px;font-size:15.4px"><span style="color:#67c23a">查看</span><span style="color:#1890ff;margin-left:17.6px">修改</span><span style="color:#f56c6c;margin-left:17.6px">删除</span></div>
<div class="cell" style="left:287.5px;top:1331.95px;width:100px;height:42.95px;line-height:42.95px">21</div>
<div class="cell" style="left:387.5px;top:1331.95px;width:524.3px;height:42.95px;line-height:42.95px">上海金师傅餐饮管理有限公司</div>
<div class="cell" style="left:1098.0px;top:1331.95px;width:374.0px;height:42.95px;line-height:42.95px">上海市卢湾区思南路78号</div>
<div class="a" style="left:1969.8px;top:1340.73px;width:80px;height:24.8px;border-radius:12.4px;background:#1890ff"><div class="a" style="left:55.2px;top:2.1px;width:20.6px;height:20.6px;border-radius:50%;background:#fff"></div></div>
<div class="a t" style="left:2134px;top:1338.63px;height:28px;line-height:28px;font-size:15.4px"><span style="color:#67c23a">查看</span><span style="color:#1890ff;margin-left:17.6px">修改</span><span style="color:#f56c6c;margin-left:17.6px">删除</span></div>
<div class="cell" style="left:287.5px;top:1374.90px;width:100px;height:42.95px;line-height:42.95px">22</div>
<div class="cell" style="left:387.5px;top:1374.90px;width:524.3px;height:42.95px;line-height:42.95px">广州露迪内衣有限公司</div>
<div class="cell" style="left:1098.0px;top:1374.90px;width:374.0px;height:42.95px;line-height:42.95px">广州市广园西路瑶台西街291号4楼</div>
<div class="a" style="left:1969.8px;top:1383.68px;width:80px;height:24.8px;border-radius:12.4px;background:#1890ff"><div class="a" style="left:55.2px;top:2.1px;width:20.6px;height:20.6px;border-radius:50%;background:#fff"></div></div>
<div class="a t" style="left:2134px;top:1381.58px;height:28px;line-height:28px;font-size:15.4px"><span style="color:#67c23a">查看</span><span style="color:#1890ff;margin-left:17.6px">修改</span><span style="color:#f56c6c;margin-left:17.6px">删除</span></div>
<div class="cell" style="left:287.5px;top:1417.85px;width:100px;height:42.95px;line-height:42.95px">23</div>
<div class="cell" style="left:387.5px;top:1417.85px;width:524.3px;height:42.95px;line-height:42.95px">白城市金百合商贸有限责任公司</div>
<div class="cell" style="left:1098.0px;top:1417.85px;width:374.0px;height:42.95px;line-height:42.95px">吉林省白城市海明东路123号</div>
<div class="a" style="left:1969.8px;top:1426.63px;width:80px;height:24.8px;border-radius:12.4px;background:#1890ff"><div class="a" style="left:55.2px;top:2.1px;width:20.6px;height:20.6px;border-radius:50%;background:#fff"></div></div>
<div class="a t" style="left:2134px;top:1424.53px;height:28px;line-height:28px;font-size:15.4px"><span style="color:#67c23a">查看</span><span style="color:#1890ff;margin-left:17.6px">修改</span><span style="color:#f56c6c;margin-left:17.6px">删除</span></div>
<div class="cell" style="left:287.5px;top:1460.80px;width:100px;height:42.95px;line-height:42.95px">24</div>
<div class="cell" style="left:387.5px;top:1460.80px;width:524.3px;height:42.95px;line-height:42.95px">福建晋江多美味食品有限公司</div>
<div class="cell" style="left:1098.0px;top:1460.80px;width:374.0px;height:42.95px;line-height:42.95px">福建省晋江市安平开发区8区12号</div>
<div class="a" style="left:1969.8px;top:1469.58px;width:80px;height:24.8px;border-radius:12.4px;background:#1890ff"><div class="a" style="left:55.2px;top:2.1px;width:20.6px;height:20.6px;border-radius:50%;background:#fff"></div></div>
<div class="a t" style="left:2134px;top:1467.48px;height:28px;line-height:28px;font-size:15.4px"><span style="color:#67c23a">查看</span><span style="color:#1890ff;margin-left:17.6px">修改</span><span style="color:#f56c6c;margin-left:17.6px">删除</span></div>
<div class="a" style="left:287.5px;top:1502.95px;width:2026.5px;height:42.95px;background:#f5f7fa"></div>
<div class="cell" style="left:287.5px;top:1503.75px;width:100px;height:42.95px;line-height:42.95px">25</div>
<div class="cell" style="left:387.5px;top:1503.75px;width:524.3px;height:42.95px;line-height:42.95px">美程在线印刷有限公司</div>
<div class="cell" style="left:1098.0px;top:1503.75px;width:374.0px;height:42.95px;line-height:42.95px">沈阳市沈河区风雨坛街58号</div>
<div class="a" style="left:1969.8px;top:1512.53px;width:80px;height:24.8px;border-radius:12.4px;background:#1890ff"><div class="a" style="left:55.2px;top:2.1px;width:20.6px;height:20.6px;border-radius:50%;background:#fff"></div></div>
<div class="a t" style="left:2134px;top:1510.43px;height:28px;line-height:28px;font-size:15.4px"><span style="color:#67c23a">查看</span><span style="color:#1890ff;margin-left:17.6px">修改</span><span style="color:#f56c6c;margin-left:17.6px">删除</span></div>
<div class="cell" style="left:287.5px;top:1546.70px;width:100px;height:42.95px;line-height:42.95px">26</div>
<div class="cell" style="left:387.5px;top:1546.70px;width:524.3px;height:42.95px;line-height:42.95px">深圳百佳超级市场有限公司</div>
<div class="cell" style="left:1098.0px;top:1546.70px;width:374.0px;height:42.95px;line-height:42.95px">深圳市罗湖区东门南路宝丰大厦3楼</div>
<div class="a" style="left:1969.8px;top:1555.48px;width:80px;height:24.8px;border-radius:12.4px;background:#1890ff"><div class="a" style="left:55.2px;top:2.1px;width:20.6px;height:20.6px;border-radius:50%;background:#fff"></div></div>
<div class="a t" style="left:2134px;top:1553.38px;height:28px;line-height:28px;font-size:15.4px"><span style="color:#67c23a">查看</span><span style="color:#1890ff;margin-left:17.6px">修改</span><span style="color:#f56c6c;margin-left:17.6px">删除</span></div>
<div class="a" style="left:2313px;top:294.00px;width:29px;height:1294.85px;background:#fafafa;border-left:2px solid #e8e8e8"></div>
<div class="a" style="left:2322px;top:301px;width:16px;height:333px;border-radius:8px;background:#c1c1c1"></div>
<div class="hl" style="left:288px;top:247px;width:2055px;height:2px"></div>
<div class="hl" style="left:288px;top:293px;width:2055px;height:2px"></div>
<div class="hl" style="left:288px;top:336px;width:2026px;height:2px"></div>
<div class="hl" style="left:288px;top:379px;width:2026px;height:2px"></div>
<div class="hl" style="left:288px;top:447px;width:2026px;height:2px"></div>
<div class="hl" style="left:288px;top:490px;width:2026px;height:2px"></div>
<div class="hl" style="left:288px;top:558px;width:2026px;height:2px"></div>
<div class="hl" style="left:288px;top:601px;width:2026px;height:2px"></div>
<div class="hl" style="left:288px;top:644px;width:2026px;height:2px"></div>
<div class="hl" style="left:288px;top:687px;width:2026px;height:2px"></div>
<div class="hl" style="left:288px;top:756px;width:2026px;height:2px"></div>
<div class="hl" style="left:288px;top:799px;width:2026px;height:2px"></div>
<div class="hl" style="left:288px;top:842px;width:2026px;height:2px"></div>
<div class="hl" style="left:288px;top:885px;width:2026px;height:2px"></div>
<div class="hl" style="left:288px;top:928px;width:2026px;height:2px"></div>
<div class="hl" style="left:288px;top:996px;width:2026px;height:2px"></div>
<div class="hl" style="left:288px;top:1039px;width:2026px;height:2px"></div>
<div class="hl" style="left:288px;top:1107px;width:2026px;height:2px"></div>
<div class="hl" style="left:288px;top:1150px;width:2026px;height:2px"></div>
<div class="hl" style="left:288px;top:1193px;width:2026px;height:2px"></div>
<div class="hl" style="left:288px;top:1262px;width:2026px;height:2px"></div>
<div class="hl" style="left:288px;top:1330px;width:2026px;height:2px"></div>
<div class="hl" style="left:288px;top:1373px;width:2026px;height:2px"></div>
<div class="hl" style="left:288px;top:1416px;width:2026px;height:2px"></div>
<div class="hl" style="left:288px;top:1459px;width:2026px;height:2px"></div>
<div class="hl" style="left:288px;top:1502px;width:2026px;height:2px"></div>
<div class="hl" style="left:288px;top:1545px;width:2026px;height:2px"></div>
<div class="hl" style="left:288px;top:1588px;width:2026px;height:2px"></div>
<div class="hl" style="left:287px;top:247px;width:2px;height:1343px"></div>
<div class="hl" style="left:387px;top:248px;width:2px;height:1341px"></div>
<div class="hl" style="left:911px;top:248px;width:2px;height:1341px"></div>
<div class="hl" style="left:1097px;top:248px;width:2px;height:1341px"></div>
<div class="hl" style="left:1471px;top:248px;width:2px;height:1341px"></div>
<div class="hl" style="left:1705px;top:248px;width:2px;height:1341px"></div>
<div class="hl" style="left:1939px;top:248px;width:2px;height:1341px"></div>
<div class="hl" style="left:2079px;top:248px;width:2px;height:1341px"></div>
<div class="hl" style="left:2313px;top:248px;width:2px;height:46px"></div>
<div class="hl" style="left:2342px;top:247px;width:2px;height:1343px"></div>
<div class="hl" style="left:288px;top:1588px;width:2055px;height:2px"></div>
<div class="a t" style="left:1535px;top:1608.4px;height:37px;line-height:37px;font-size:18px;color:#606266">共 486 条</div>
<div class="inp" style="left:1630.6px;top:1608.4px;width:133px;height:37px;line-height:33px;padding-left:18px">100条/页<svg class="a" style="left:108px;top:14px" width="12" height="7" viewBox="0 0 12 7"><path d="M1 1l5 5 5-5" fill="none" stroke="#c0c4cc" stroke-width="1.1"/></svg></div>
<div class="a" style="left:1791.9px;top:1608.4px;width:41px;height:37px;background:#f4f4f5;border-radius:3px"><svg class="a" style="left:17px;top:12.5px" width="7" height="12" viewBox="0 0 7 12"><path d="M6 1L1 6l5 5" fill="none" stroke="#c0c4cc" stroke-width="1.3"/></svg></div>
<div class="a" style="left:1848px;top:1608.4px;width:41px;height:37px;line-height:37px;background:#1890ff;color:#fff;font-size:18px;font-weight:bold;text-align:center;border-radius:3px">1</div>
<div class="a" style="left:1904.3px;top:1608.4px;width:41px;height:37px;line-height:37px;background:#f4f4f5;color:#606266;font-size:18px;font-weight:bold;text-align:center;border-radius:3px">2</div>
<div class="a" style="left:1960.5px;top:1608.4px;width:41px;height:37px;line-height:37px;background:#f4f4f5;color:#606266;font-size:18px;font-weight:bold;text-align:center;border-radius:3px">3</div>
<div class="a" style="left:2016.7px;top:1608.4px;width:41px;height:37px;line-height:37px;background:#f4f4f5;color:#606266;font-size:18px;font-weight:bold;text-align:center;border-radius:3px">4</div>
<div class="a" style="left:2072.9px;top:1608.4px;width:41px;height:37px;line-height:37px;background:#f4f4f5;color:#606266;font-size:18px;font-weight:bold;text-align:center;border-radius:3px">5</div>
<div class="a" style="left:2128.7px;top:1608.4px;width:41px;height:37px;background:#f4f4f5;border-radius:3px"><svg class="a" style="left:17px;top:12.5px" width="7" height="12" viewBox="0 0 7 12"><path d="M1 1l5 5-5 5" fill="none" stroke="#303133" stroke-width="1.3"/></svg></div>
<div class="a t" style="left:2211px;top:1608.4px;height:37px;line-height:37px;font-size:18px;color:#606266">前往</div>
<div class="inp" style="left:2252.7px;top:1608.4px;width:60.5px;height:37px;line-height:33px;text-align:center">1</div>
<div class="a t" style="left:2319.5px;top:1608.4px;height:37px;line-height:37px;font-size:18px;color:#606266">页</div>
<div class="a" style="left:2370px;top:99px;width:30px;height:1548px;background:#fafafa;border-left:2px solid #e8e8e8;border-right:2px solid #efefef;z-index:1"></div>
<div class="a" style="left:2378px;top:106px;width:16px;height:1514px;border-radius:8px;background:#c1c1c1;z-index:1"></div>
<div class="a" style="left:659.5px;top:98.5px;width:1081px;height:1119px;background:#fff;border-radius:2.7px;box-shadow:0 1px 3px rgba(0,0,0,.3);z-index:4">
<div class="a t" style="left:26.5px;top:50.5px;height:28px;line-height:28px;font-size:21px;color:#303133">客户</div>
<svg class="a" style="left:1038.0px;top:31.5px" width="13.5" height="13.5" viewBox="0 0 13.5 13.5"><path d="M0.5 0.5l12.5 12.5M13 0.5L0.5 13" stroke="#909399" stroke-width="1.3"/></svg>
<div class="lbl" style="left:-69.80px;top:100.20px;width:200px;height:42.4px;line-height:42.4px"><span style="color:#f56c6c;margin-right:5px;font-size:20px">*</span>客户名称</div>
<div class="inp" style="left:146.80px;top:100.20px;width:899.70px;height:42.4px;line-height:38.4px"><span class="a" style="left:20.5px;top:0">山河智能装备股份有限公司</span></div>
<div class="lbl" style="left:-69.80px;top:156.55px;width:200px;height:42.4px;line-height:42.4px">客户别名</div>
<div class="inp" style="left:146.80px;top:156.55px;width:899.70px;height:42.4px;line-height:38.4px"><span class="a" style="left:20.5px;top:0">山河智能</span></div>
<div class="lbl" style="left:-69.80px;top:212.90px;width:200px;height:42.4px;line-height:42.4px">简称</div>
<div class="inp" style="left:146.80px;top:212.90px;width:383.00px;height:42.4px;line-height:38.4px"><span class="a" style="left:20.5px;top:0">山河智能</span></div>
<div class="lbl" style="left:447.00px;top:212.90px;width:200px;height:42.4px;line-height:42.4px">所属省/市</div>
<div class="inp" style="left:664.10px;top:212.90px;width:382.40px;height:42.4px;line-height:38.4px"><span class="a" style="left:20.5px;top:0">湖南省 / 长沙市</span><svg class="a" style="left:349.4000000000001px;top:16px" width="14" height="8" viewBox="0 0 14 8"><path d="M1 1l6 6 6-6" fill="none" stroke="#c0c4cc" stroke-width="1.2"/></svg></div>
<div class="lbl" style="left:-69.80px;top:269.25px;width:200px;height:42.4px;line-height:42.4px">公司地址</div>
<div class="inp" style="left:146.80px;top:269.25px;width:899.70px;height:42.4px;line-height:38.4px"><span class="a" style="left:20.5px;top:0">长沙经济技术开发区</span></div>
<div class="lbl" style="left:-69.80px;top:325.60px;width:200px;height:42.4px;line-height:42.4px">邮编</div>
<div class="inp" style="left:146.80px;top:325.60px;width:383.00px;height:42.4px;line-height:38.4px"><span class="a" style="left:20.5px;top:0">410006</span></div>
<div class="lbl" style="left:447.00px;top:325.60px;width:200px;height:42.4px;line-height:42.4px">电话</div>
<div class="inp" style="left:664.10px;top:325.60px;width:382.40px;height:42.4px;line-height:38.4px"><span class="a" style="left:20.5px;top:0">18008405527</span></div>
<div class="lbl" style="left:-69.80px;top:381.95px;width:200px;height:42.4px;line-height:42.4px">信用等级</div>
<div class="inp" style="left:146.80px;top:381.95px;width:383.00px;height:42.4px;line-height:38.4px"><span class="a" style="left:20.5px;top:0">A级</span><svg class="a" style="left:350.0px;top:16px" width="14" height="8" viewBox="0 0 14 8"><path d="M1 1l6 6 6-6" fill="none" stroke="#c0c4cc" stroke-width="1.2"/></svg></div>
<div class="lbl" style="left:447.00px;top:381.95px;width:200px;height:42.4px;line-height:42.4px">信用额度</div>
<div class="inp" style="left:664.10px;top:381.95px;width:382.40px;height:42.4px;line-height:38.4px"><span class="a" style="left:20.5px;top:0">100</span></div>
<div class="lbl" style="left:-69.80px;top:438.30px;width:200px;height:42.4px;line-height:42.4px">客户分类</div>
<div class="inp" style="left:146.80px;top:438.30px;width:383.00px;height:42.4px;line-height:38.4px"><span class="a" style="left:20.5px;top:0">核心客户</span><svg class="a" style="left:350.0px;top:16px" width="14" height="8" viewBox="0 0 14 8"><path d="M1 1l6 6 6-6" fill="none" stroke="#c0c4cc" stroke-width="1.2"/></svg></div>
<div class="lbl" style="left:447.00px;top:438.30px;width:200px;height:42.4px;line-height:42.4px">备注</div>
<div class="inp" style="left:664.10px;top:438.30px;width:382.40px;height:42.4px;line-height:38.4px"><span class="a" style="left:20.5px;top:0">000000000</span></div>
<div class="lbl" style="left:-69.80px;top:494.65px;width:200px;height:42.4px;line-height:42.4px">状态</div>
<div class="a" style="left:146.79999999999995px;top:506.55px;width:18.6px;height:18.6px;border-radius:50%;background:#1890ff"><div class="a" style="left:6.3px;top:6.3px;width:6px;height:6px;border-radius:50%;background:#fff"></div></div>
<div class="a t" style="left:172.5px;top:501.85px;height:28px;line-height:28px;font-size:18px;color:#1890ff">正常</div>
<div class="a" style="left:230.89999999999998px;top:506.55px;width:18.6px;height:18.6px;border-radius:50%;border:2px solid #dcdfe6;background:#fff"></div>
<div class="a t" style="left:257.0px;top:501.85px;height:28px;line-height:28px;font-size:18px;color:#606266">停用</div>
<div class="a" style="left:38.5px;top:561.5px;width:1009px;height:432px;border-radius:5px;background:#fff;box-shadow:0 2px 16px 0 rgba(0,0,0,.1)"></div>
<div class="a" style="left:59.200000000000045px;top:632.5px;width:967.3px;height:2.7px;background:#e4e7ed"></div>
<div class="a" style="left:59.200000000000045px;top:632.5px;width:72.5px;height:2.7px;background:#1890ff"></div>
<div class="a t" style="left:59.200000000000045px;top:594.5px;height:28px;line-height:28px;font-size:18px;color:#1890ff">开票信息</div>
<div class="a t" style="left:182.89999999999998px;top:594.5px;height:28px;line-height:28px;font-size:18px;color:#303133">业务联系人</div>
<div class="a t" style="left:322.79999999999995px;top:594.5px;height:28px;line-height:28px;font-size:18px;color:#303133">财务联系人</div>
<div class="lbl" style="left:-36.60px;top:657.20px;width:200px;height:42.4px;line-height:42.4px">开户行</div>
<div class="inp" style="left:180.40px;top:657.20px;width:832.1px;height:42.4px"></div>
<div class="lbl" style="left:-36.60px;top:713.55px;width:200px;height:42.4px;line-height:42.4px">地址电话</div>
<div class="inp" style="left:180.40px;top:713.55px;width:832.1px;height:42.4px"></div>
<div class="lbl" style="left:-36.60px;top:769.90px;width:200px;height:42.4px;line-height:42.4px">账号</div>
<div class="inp" style="left:180.40px;top:769.90px;width:832.1px;height:42.4px"></div>
<div class="lbl" style="left:-36.60px;top:826.25px;width:200px;height:42.4px;line-height:42.4px">税号</div>
<div class="inp" style="left:180.40px;top:826.25px;width:832.1px;height:42.4px"></div>
<div class="btn" style="left:855.7px;top:1051.7px;width:90.2px;height:42.5px;background:#13ce66;color:#fff;font-size:18px;line-height:42.5px;text-align:center">保存</div>
<div class="btn" style="left:959.3px;top:1051.7px;width:94.2px;height:42.5px;background:#fff;border:1px solid #dcdfe6;color:#606266;font-size:18px;line-height:40.5px;text-align:center">取 消</div>
</div>
</body></html>
